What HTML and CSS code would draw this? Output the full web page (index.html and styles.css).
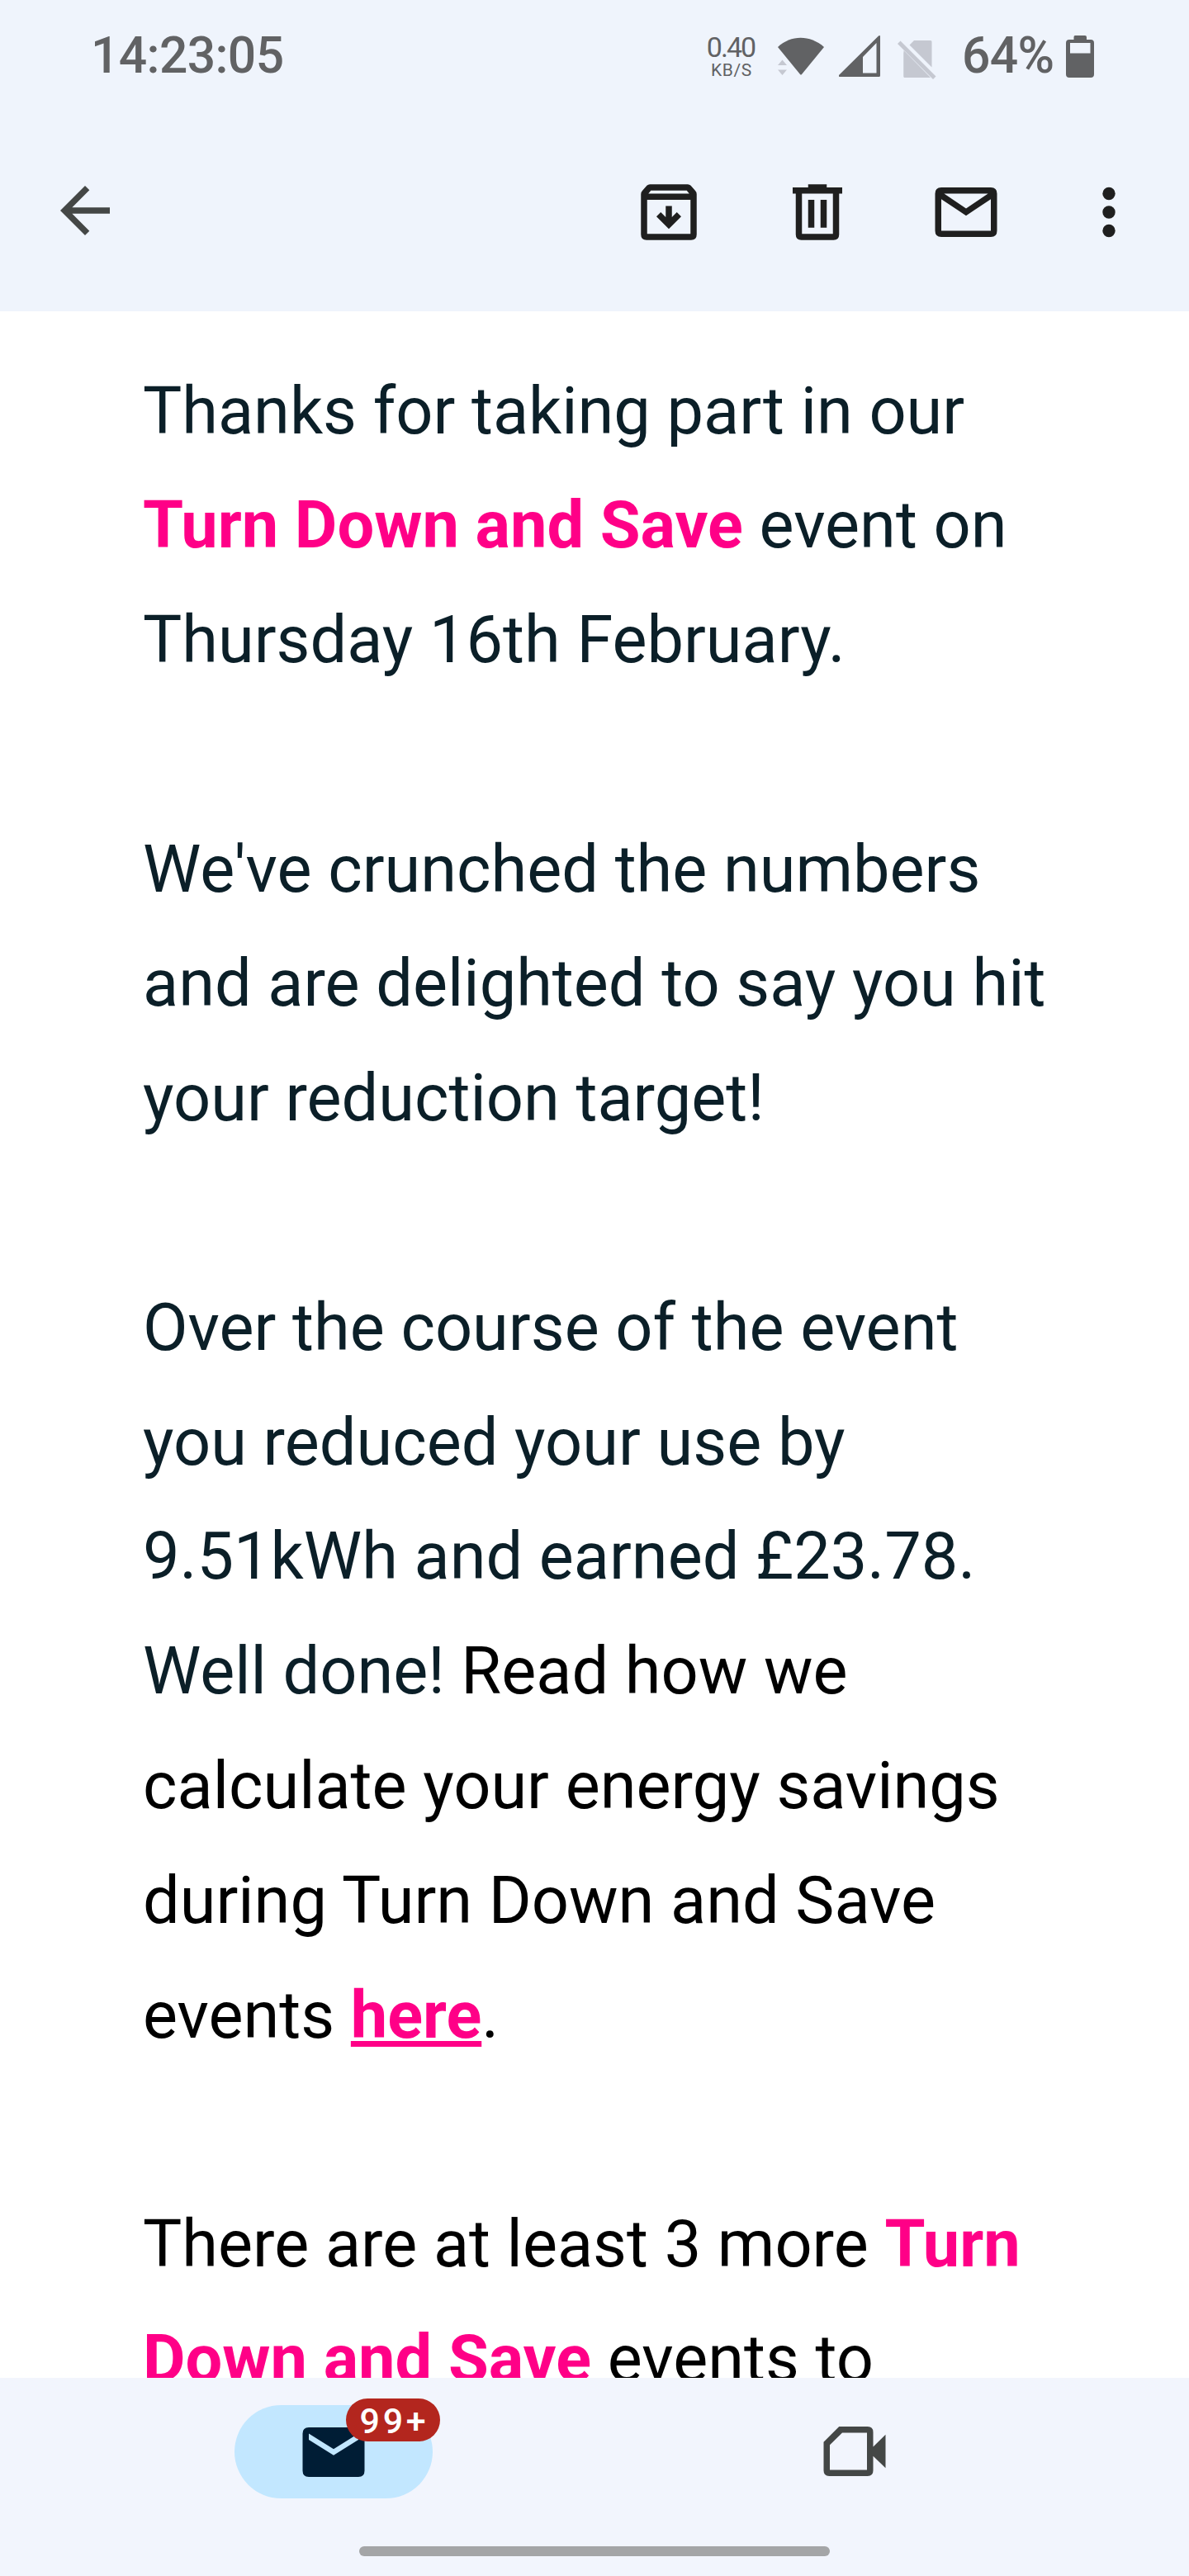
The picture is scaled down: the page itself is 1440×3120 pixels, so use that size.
FILE: index.html
```html
<!DOCTYPE html>
<html lang="en">
<head>
<meta charset="utf-8">
<title>Mail</title>
<link rel="stylesheet" href="styles.css">
</head>
<body>
<div class="screen">
  <header class="header">
    <div class="status">
      <span class="clock">14:23:05</span>
      <div class="indicators">
        <div class="speed"><span class="rate">0.40</span><span class="unit">KB/S</span></div>
        <svg class="wifi" viewBox="0 0 58 46"><path d="M1 12C17-3 40-3 57 12L30 45Q29 46 28 45Z" fill="#616264"/><path d="M1 34L6.500 27.500L12 34ZM1 39.500H12L6.500 46Z" fill="#c5c8d1"/></svg>
        <svg class="signal" viewBox="0 0 50 50"><path fill-rule="evenodd" d="M0 49.500V48L48 0.500Q50 -.5 50 1V48.500Q50 50 48.500 50H0.500ZM29 45.500H45.500V9L29 26Z" fill="#616264"/></svg>
        <svg class="sim" viewBox="0 0 47 48"><path d="M14.500 6.500L20 1H40Q41.500 1 41.500 2.500V33.500ZM7.500 13L41.500 44.500Q41.500 46 40 46H9Q7.500 46 7.500 44.500Z" fill="#c5c8d1"/><path d="M2 3.500L45 47" stroke="#eff4fc" stroke-width="9"/><path d="M7.500 13L40 46H9Q7.500 46 7.500 44.500ZM0 5L3.500 1.500L46.500 44.500L43 48Z" fill="#c5c8d1"/></svg>
        <span class="percent">64%</span>
        <svg class="battery" viewBox="0 0 34 51"><path fill-rule="evenodd" d="M11 0H23Q25 0 25 2V5H30Q34 5 34 9V47Q34 51 30 51H4Q0 51 0 47V9Q0 5 4 5H9.500V2Q9.500 0 11 0ZM5 9V21.500H29.500V9Z" fill="#616264"/></svg>
      </div>
    </div>
    <div class="toolbar">
      <svg class="icon back" viewBox="0 0 24 24"><path d="M20 11H7.830L13.420 5.410L12 4L4 12L12 20L13.410 18.590L7.830 13H20Z"/></svg>
      <svg class="icon" viewBox="0 0 24 24"><path fill-rule="evenodd" d="M5.900 3H18.100Q18.700 3 19.100 3.400L20.500 5Q21 5.500 21 6.200V19.200Q21 21 19.200 21H4.800Q3 21 3 19.200V6.200Q3 5.500 3.500 5L4.900 3.400Q5.300 3 5.900 3ZM6.200 5L5.400 6H18.600L17.800 5ZM5 8V19H19V8ZM11 10H13V13.600L14.600 12L16 13.400L12 17.400L8 13.400L9.400 12L11 13.600Z"/></svg>
      <svg class="icon" viewBox="0 0 24 24"><path fill-rule="evenodd" d="M9 3H15V4H20V6H19V19.200Q19 21 17.200 21H6.800Q5 21 5 19.200V6H4V4H9ZM7 6V19H17V6ZM9 8H11V17H9ZM13 8H15V17H13Z"/></svg>
      <svg class="icon" viewBox="0 0 24 24"><path fill-rule="evenodd" d="M4 4H20Q22 4 22 6V18Q22 20 20 20H4Q2 20 2 18V6Q2 4 4 4ZM4.900 6L12 10.800L19.100 6ZM4 7.800V18H20V7.800L12 13.100Z"/></svg>
      <svg class="icon more" viewBox="0 0 24 24"><circle cx="12" cy="6" r="2.050"/><circle cx="12" cy="12" r="2.050"/><circle cx="12" cy="18" r="2.050"/></svg>
    </div>
  </header>
  <main class="message">
    <p class="navy">Thanks for taking part in our<br><b>Turn Down and Save</b> event on<br>Thursday 16th February.</p>
    <p class="navy">We've crunched the numbers<br>and are delighted to say you hit<br>your reduction target!</p>
    <p><span class="navy">Over the course of the event<br>you reduced your use by<br>9.51kWh and earned £23.78.<br>Well done!</span> Read how we<br>calculate your energy savings<br>during Turn Down and Save<br>events <a class="link" href="#">here</a>.</p>
    <p>There are at least 3 more <b>Turn<br>Down and Save</b> events to</p>
  </main>
  <nav class="nav">
    <div class="tabs">
      <div class="tab"><div class="pill">
        <svg class="icon dark" viewBox="0 0 24 24"><path fill-rule="evenodd" d="M4 4H20Q22 4 22 6V18Q22 20 20 20H4Q2 20 2 18V6Q2 4 4 4ZM4 6V8L12 13L20 8V6L12 11Z"/></svg>
        <span class="badge">99+</span>
      </div></div>
      <div class="tab">
        <svg class="icon video" viewBox="0 0 24 24"><path fill-rule="evenodd" d="M7 4H16.200Q18 4 18 5.800V10.500L22 6.600V17.400L18 13.500V18.200Q18 20 16.200 20H3.800Q2 20 2 18.200V9ZM8 6L4 9.900V18H16V6Z"/></svg>
      </div>
    </div>
    <div class="home"></div>
  </nav>
</div>
</body>
</html>
```
FILE: styles.css
```css
* { box-sizing: border-box; }
body { margin: 0; font-family: Roboto, sans-serif; background: #fff; }
svg { display: block; flex: none; }
.screen { width: 1440px; height: 3120px; display: flex; flex-direction: column; overflow: hidden; }
.header { height: 377px; flex: none; background: #eff4fc; }
.status { height: 136px; padding: 0 115px 0 110px; display: flex; justify-content: space-between; align-items: center; color: #616264; }
.clock, .percent { font-size: 60.5px; line-height: 60px; font-weight: 500; letter-spacing: -.6px; }
.indicators { display: flex; align-items: center; }
.speed { display: flex; flex-direction: column; align-items: center; width: 62px; margin-right: 25px; }
.rate { font-size: 34px; line-height: 34px; letter-spacing: -2px; }
.unit { font-size: 21px; line-height: 22px; letter-spacing: .6px; padding-left: 2px; }
.wifi { width: 58px; height: 46px; margin-right: 17px; }
.signal { width: 50px; height: 50px; margin-right: 21px; }
.sim { width: 47px; height: 48px; margin: 7px 31px 0 0; }
.percent { width: 110px; margin-right: 16px; }
.battery { width: 34px; height: 51px; }
.toolbar { height: 241px; padding: 0 52px 0 57.5px; display: flex; align-items: center; gap: 90px; }
.icon { width: 90px; height: 90px; fill: #1f1f1f; }
.back { fill: #444746; margin-right: auto; margin-top: -3px; }
.more { margin-left: -7px; }
.message { flex: 1; min-height: 0; overflow: hidden; padding: 51.5px 0 0 173px; font-size: 79.3px; line-height: 138.8px; color: #000; white-space: nowrap; }
.message p { margin: 0 0 138.8px; }
.message .navy { color: #0b1f28; }
.message b, .link { color: #ff0087; font-weight: 700; }
.link { text-decoration: underline; text-decoration-thickness: 7px; text-underline-offset: 4px; }
.nav { flex: none; height: 240px; background: #f2f5fd; display: flex; flex-direction: column; align-items: center; }
.tabs { width: 100%; height: 204px; display: flex; padding: 33px 89.5px 0 88.5px; }
.tab { flex: 0 0 631px; display: flex; justify-content: center; align-items: flex-start; }
.pill { position: relative; width: 240px; height: 113px; border-radius: 57px; background: #c2e7ff; display: flex; align-items: center; justify-content: center; }
.dark { fill: #001d35; }
.badge { position: absolute; left: 135px; top: -8px; width: 114px; height: 52px; border-radius: 26px; background: #b3261e; color: #fff; font-size: 43px; line-height: 54px; font-weight: 500; letter-spacing: 3.7px; text-align: center; padding-left: 3px; }
.video { fill: #444746; margin-top: 11px; }
.home { width: 570px; height: 12px; border-radius: 6px; background: #a4a5a7; }
```
